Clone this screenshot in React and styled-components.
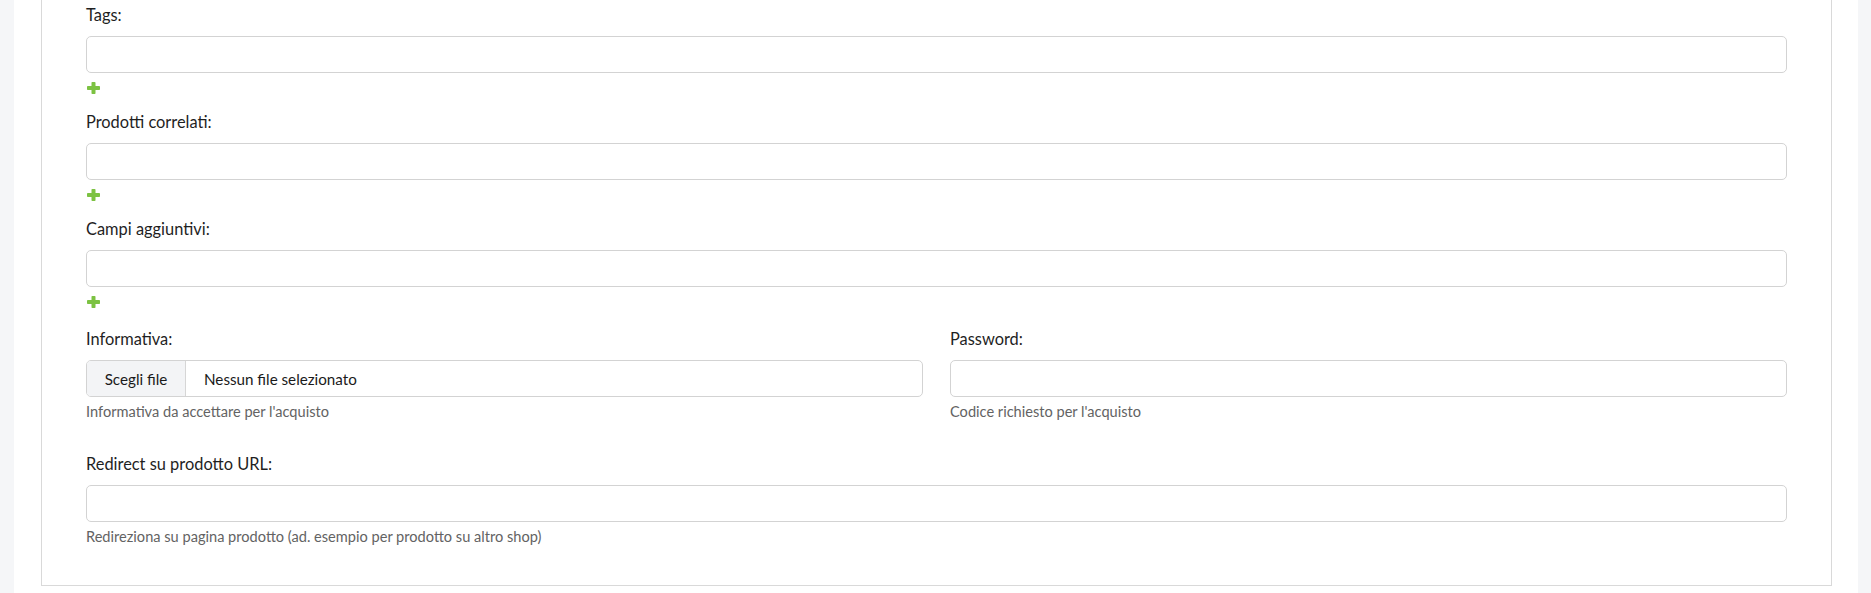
import styled, { createGlobalStyle } from "styled-components"

const GlobalStyle = createGlobalStyle`
    html, body {
        margin: 0;
        padding: 0;
        background-color: #f5f6f8;
        font-family: Lato, "Open Sans", sans-serif;
        color: #2c2c2c;
    }
`

const Page = styled.div`
    margin: 0 13px 0 14px;
    padding: 0 26px 8px 27px;
    background-color: #ffffff;
    min-height: 593px;
    box-sizing: border-box;
`

const Panel = styled.div`
    border: 1px solid #d9d9d9;
    border-top: none;
    padding: 2px 44px 37px;
`

const Group = styled.div`
    margin-bottom: ${(props) => props.$gap || 0}px;
`

const Label = styled.label`
    display: block;
    font-size: 16.4px;
    line-height: 25px;
    margin-bottom: 9px;
    color: #1f1f1f;
`

const Input = styled.input`
    display: block;
    width: 100%;
    height: 37px;
    box-sizing: border-box;
    border: 1px solid #d3d3d3;
    border-radius: 5px;
    background: #fff;
    font-family: inherit;
    font-size: 16px;
    padding: 0 12px;
    outline: none;
`

const AddRow = styled.div`
    display: flex;
    align-items: center;
    height: 20px;
    margin-top: 5px;
    padding-left: 1px;
`

const Columns = styled.div`
    display: grid;
    grid-template-columns: 1fr 1fr;
    column-gap: 27px;
    margin-top: 14px;
    margin-bottom: 28px;
`

const FileBox = styled.div`
    display: flex;
    align-items: stretch;
    height: 37px;
    box-sizing: border-box;
    border: 1px solid #d3d3d3;
    border-radius: 5px;
    overflow: hidden;
    font-size: 15.2px;
`

const FileButton = styled.div`
    width: 98px;
    display: flex;
    align-items: center;
    justify-content: center;
    background-color: #f3f4f6;
    border-right: 1px solid #d6d6d6;
    color: #1a1a1a;
`

const FileName = styled.div`
    display: flex;
    align-items: center;
    padding-left: 18px;
    color: #1a1a1a;
`

const Help = styled.div`
    font-size: 14.6px;
    line-height: 22px;
    margin-top: 4px;
    color: #636363;
`

function PlusIcon() {
    return (
        <svg width="13" height="12" viewBox="0 0 13 12">
            <rect x="0" y="4" width="13" height="4" rx="0.8" fill="#7cc242" />
            <rect x="4.5" y="0" width="4" height="12" rx="0.8" fill="#7cc242" />
        </svg>
    )
}

function RepeaterField({ label, gap }) {
    return (
        <Group $gap={gap}>
            <Label>{label}</Label>
            <Input type="text" />
            <AddRow>
                <PlusIcon />
            </AddRow>
        </Group>
    )
}

export default function App() {
    return (
        <>
            <GlobalStyle />
            <Page>
                <Panel>
                    <RepeaterField label="Tags:" gap={11} />
                    <RepeaterField label="Prodotti correlati:" gap={11} />
                    <RepeaterField label="Campi aggiuntivi:" gap={11} />
                    <Columns>
                        <div>
                            <Label>Informativa:</Label>
                            <FileBox>
                                <FileButton>Scegli file</FileButton>
                                <FileName>Nessun file selezionato</FileName>
                            </FileBox>
                            <Help>Informativa da accettare per l'acquisto</Help>
                        </div>
                        <div>
                            <Label>Password:</Label>
                            <Input type="text" />
                            <Help>Codice richiesto per l'acquisto</Help>
                        </div>
                    </Columns>
                    <Group>
                        <Label>Redirect su prodotto URL:</Label>
                        <Input type="text" />
                        <Help>Redireziona su pagina prodotto (ad. esempio per prodotto su altro shop)</Help>
                    </Group>
                </Panel>
            </Page>
        </>
    )
}
